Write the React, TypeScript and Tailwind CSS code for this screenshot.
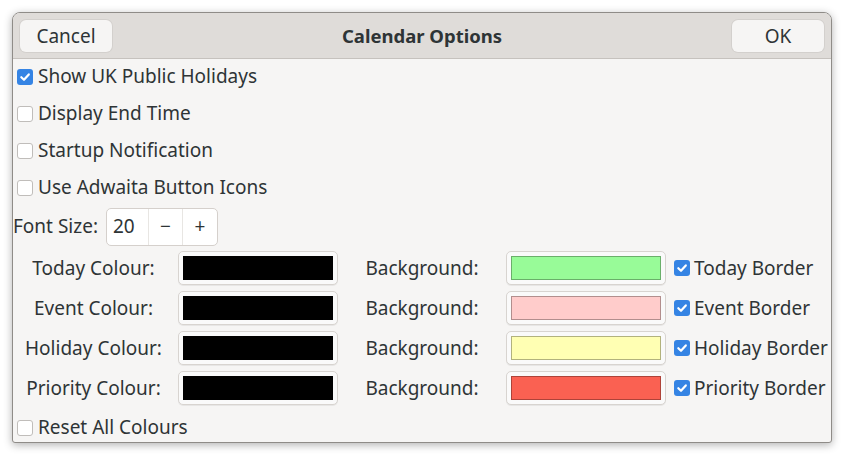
import React from "react";

const FONT = { fontFamily: '"Noto Sans", "Open Sans", sans-serif' };

const OPTIONS = [
  { label: "Show UK Public Holidays", checked: true },
  { label: "Display End Time", checked: false },
  { label: "Startup Notification", checked: false },
  { label: "Use Adwaita Button Icons", checked: false },
];

const COLOURS = [
  { name: "Today Colour:", bg: "bg-[#98fb98]", border: "Today Border" },
  { name: "Event Colour:", bg: "bg-[#ffcccb]", border: "Event Border" },
  { name: "Holiday Colour:", bg: "bg-[#ffffb3]", border: "Holiday Border" },
  { name: "Priority Colour:", bg: "bg-[#fa6152]", border: "Priority Border" },
];

function Check({ checked }: { checked: boolean }) {
  if (checked) {
    return (
      <span className="flex h-[16px] w-[16px] shrink-0 items-center justify-center rounded-[3px] bg-[#3584e4]">
        <svg width="12" height="12" viewBox="0 0 12 12" fill="none">
          <path d="M2.3 6.2 L5 8.8 L9.8 3.4" stroke="white" strokeWidth="2.2" strokeLinecap="round" strokeLinejoin="round" />
        </svg>
      </span>
    );
  }
  return <span className="h-[16px] w-[16px] shrink-0 rounded-[3px] border border-[#c0bdba] bg-white" />;
}

function ColourButton({ swatch }: { swatch: string }) {
  return (
    <div className="flex h-[34px] w-[160px] rounded-[5px] border border-[#d8d4d0] bg-[#fafafa] p-[4px] shadow-[0_1px_0_rgba(0,0,0,0.06)]">
      <div className={`flex-1 border border-black/30 ${swatch}`} />
    </div>
  );
}

export default function App() {
  return (
    <div className="min-h-[459px] bg-white pl-[12px] pt-[12px] text-[19px] text-[#2e3436]" style={FONT}>
      <div className="flex h-[431px] w-[820px] flex-col overflow-hidden rounded-t-[8px] rounded-b-[3px] border border-[#8f8c88] bg-[#f6f5f4] shadow-[0_2px_8px_rgba(0,0,0,0.3)]">
        {/* header bar */}
        <div className="flex h-[46px] shrink-0 items-center justify-between border-b border-[#c6c2be] bg-[#dfdcd9] px-[7px] pt-[1px]">
          <button className="h-[32px] w-[92px] rounded-[6px] bg-[#f6f5f4] shadow-[0_0_0_1px_rgba(0,0,0,0.05)]">Cancel</button>
          <span className="text-[18.5px] font-bold">Calendar Options</span>
          <button className="h-[32px] w-[92px] rounded-[6px] bg-[#f6f5f4] shadow-[0_0_0_1px_rgba(0,0,0,0.05)]">OK</button>
        </div>

        <div className="-mt-px flex flex-col">
          {OPTIONS.map((o) => (
            <div key={o.label} className="flex h-[37px] items-center gap-[5px] pl-[4px]">
              <Check checked={o.checked} />
              <span>{o.label}</span>
            </div>
          ))}

          <div className="flex h-[41px] items-center gap-[8px]">
            <span>Font Size:</span>
            <div className="flex h-[38px] w-[112px] rounded-[5px] border border-[#d5d0cc] bg-white">
              <span className="flex w-[41px] items-center pl-[6px]">20</span>
              <span className="flex w-[34px] items-center justify-center border-l border-[#e8e6e3]">−</span>
              <span className="flex flex-1 items-center justify-center border-l border-[#e8e6e3]">+</span>
            </div>
          </div>

          <div className="grid grid-cols-[161px_4px_160px_168px_160px_8px_auto] pt-[1px]">
            {COLOURS.map((c) => (
              <React.Fragment key={c.name}>
                <div className="flex h-[40px] items-center justify-center">{c.name}</div>
                <div />
                <div className="flex items-center">
                  <ColourButton swatch="bg-black" />
                </div>
                <div className="flex items-center justify-center">Background:</div>
                <div className="flex items-center">
                  <ColourButton swatch={c.bg} />
                </div>
                <div />
                <div className="flex items-center gap-[4px]">
                  <Check checked />
                  <span>{c.border}</span>
                </div>
              </React.Fragment>
            ))}
          </div>

          <div className="flex h-[37px] items-center gap-[5px] pl-[4px] pt-[2px]">
            <Check checked={false} />
            <span>Reset All Colours</span>
          </div>
        </div>
      </div>
    </div>
  );
}
